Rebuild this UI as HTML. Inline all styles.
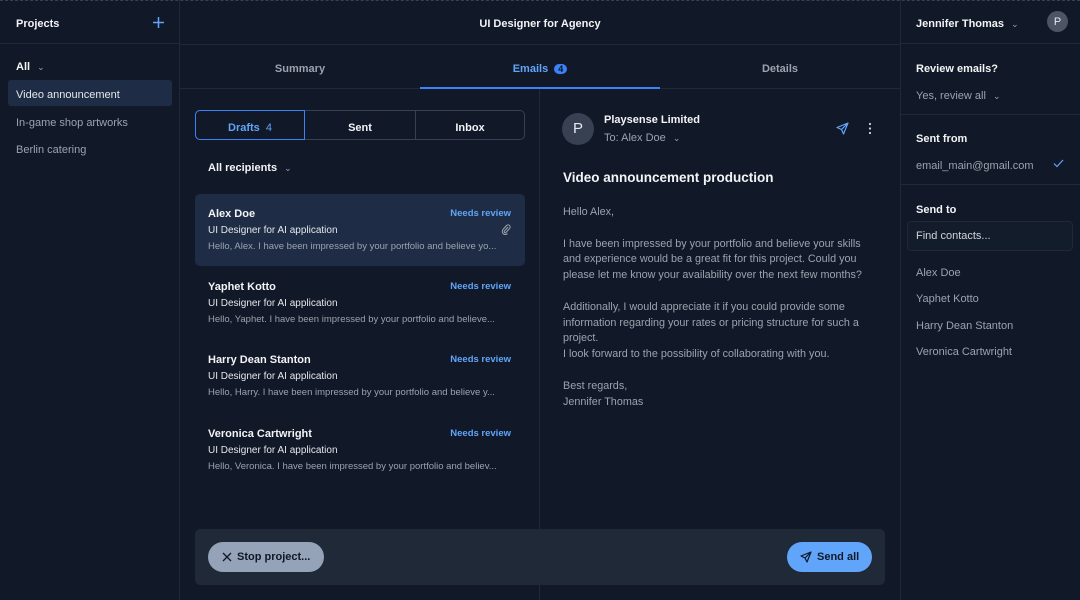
<!DOCTYPE html>
<html><head><meta charset="utf-8"><style>
*{box-sizing:border-box;margin:0;padding:0}
body{width:1080px;height:600px;background:#111827;font-family:"Liberation Sans",sans-serif;color:#f3f4f6;position:relative;overflow:hidden;font-size:11px}
.a{position:absolute;line-height:1.9}
.b{font-weight:bold}
.g{color:#9ca3af}
.gl{color:#d1d5db}
.bl{color:#60a5fa}
.vl{position:absolute;top:0;bottom:0;width:1px;background:#1f2937}
.hl{position:absolute;height:1px;background:#1f2937}
.card{position:absolute;left:195px;width:330px;height:72px;border-radius:5px}
.card div{line-height:1.45}
.card .n{position:absolute;left:13px;top:13px;font-weight:bold;font-size:11px;color:#f3f4f6}
.card .r{position:absolute;right:14px;top:13px;font-weight:bold;font-size:9.5px;color:#60a5fa}
.card .s{position:absolute;left:13px;top:30px;font-size:10px;color:#e5e7eb}
.card .p{position:absolute;left:13px;top:46px;font-size:9.5px;color:#9ca3af}
</style></head><body>
<div class="a" style="left:0;top:0;right:0;border-top:1px dashed #374151"></div>
<div class="vl" style="left:179px"></div>
<div class="vl" style="left:900px"></div>
<div class="vl" style="left:539px;top:89px"></div>
<div class="hl" style="left:0;width:180px;top:43px"></div>
<div class="hl" style="left:180px;width:720px;top:44px"></div>
<div class="hl" style="left:180px;width:720px;top:88px"></div>
<div class="hl" style="left:420px;width:240px;top:87px;height:2px;background:#3b82f6"></div>
<div class="hl" style="left:900px;width:180px;top:43px"></div>
<div class="hl" style="left:900px;width:180px;top:114px"></div>
<div class="hl" style="left:900px;width:180px;top:184px"></div>

<div class="a b" style="left:16px;top:14px;font-size:11px">Projects</div>
<svg class="a" style="left:152px;top:16px" width="13" height="13"><path d="M6.5 1v11M1 6.5h11" stroke="#60a5fa" stroke-width="1.5"/></svg>
<div class="a b" style="left:16px;top:57px">All <span style="font-weight:normal;color:#9ca3af;margin-left:4px;font-size:9px">⌄</span></div>
<div class="a" style="left:8px;top:80px;width:164px;height:26px;background:#1e2d45;border-radius:3px"></div>
<div class="a" style="left:16px;top:85px;color:#e5e7eb">Video announcement</div>
<div class="a g" style="left:16px;top:113px">In-game shop artworks</div>
<div class="a g" style="left:16px;top:140px">Berlin catering</div>

<div class="a b" style="left:180px;width:720px;top:14px;text-align:center">UI Designer for Agency</div>
<div class="a b" style="left:180px;width:240px;top:59px;text-align:center;color:#9ca3af">Summary</div>
<div class="a b bl" style="left:420px;width:240px;top:59px;text-align:center">Emails <span style="background:#3b82f6;color:#0b1220;border-radius:6px;padding:0 4px;font-size:9px;margin-left:3px">4</span></div>
<div class="a b" style="left:660px;width:240px;top:59px;text-align:center;color:#9ca3af">Details</div>

<div class="a" style="left:195px;top:110px;width:330px;height:30px;border:1px solid #374151;border-radius:5px"></div>
<div class="a" style="left:195px;top:110px;width:110px;height:30px;border:1px solid #3b82f6;border-radius:5px 0 0 5px"></div>
<div class="a" style="left:415px;top:111px;width:1px;height:28px;background:#374151"></div>
<div class="a b bl" style="left:195px;width:110px;top:118px;text-align:center">Drafts <span style="font-weight:normal;margin-left:3px">4</span></div>
<div class="a b" style="left:305px;width:110px;top:118px;text-align:center">Sent</div>
<div class="a b" style="left:415px;width:110px;top:118px;text-align:center">Inbox</div>
<div class="a b" style="left:208px;top:158px">All recipients <span style="font-weight:normal;color:#9ca3af;margin-left:4px;font-size:9px">⌄</span></div>

<div class="card" style="top:194px;background:#1e2d45"><div class="n">Alex Doe</div><div class="r">Needs review</div><div class="s">UI Designer for AI application</div><div class="p">Hello, Alex. I have been impressed by your portfolio and believe yo...</div>
<svg class="a" style="right:14px;top:30px" width="10" height="11"><path d="M7 3L3.5 7a1 1 0 0 0 1.5 1.5L8.5 4.5a2 2 0 0 0-3-3L2 5.5a3 3 0 0 0 4.5 4" fill="none" stroke="#9ca3af"/></svg></div>
<div class="card" style="top:267px"><div class="n">Yaphet Kotto</div><div class="r">Needs review</div><div class="s">UI Designer for AI application</div><div class="p">Hello, Yaphet. I have been impressed by your portfolio and believe...</div></div>
<div class="card" style="top:340px"><div class="n">Harry Dean Stanton</div><div class="r">Needs review</div><div class="s">UI Designer for AI application</div><div class="p">Hello, Harry. I have been impressed by your portfolio and believe y...</div></div>
<div class="card" style="top:414px"><div class="n">Veronica Cartwright</div><div class="r">Needs review</div><div class="s">UI Designer for AI application</div><div class="p">Hello, Veronica. I have been impressed by your portfolio and believ...</div></div>

<div class="a" style="left:562px;top:113px;width:32px;height:32px;border-radius:50%;background:#374151;color:#e5e7eb;font-size:15px;text-align:center;line-height:32px">P</div>
<div class="a b" style="left:604px;top:110px">Playsense Limited</div>
<div class="a g" style="left:604px;top:128px">To: Alex Doe <span style="font-size:9px;margin-left:4px">⌄</span></div>
<svg class="a" style="left:836px;top:122px" width="13" height="13"><path d="M12 1L1 5.5l4.5 2 2 4.5zM12 1L5.5 7.5" fill="none" stroke="#60a5fa" stroke-width="1.2" stroke-linejoin="round"/></svg>
<svg class="a" style="left:868px;top:122px" width="4" height="13"><circle cx="2" cy="2" r="1.1" fill="#d1d5db"/><circle cx="2" cy="6.5" r="1.1" fill="#d1d5db"/><circle cx="2" cy="11" r="1.1" fill="#d1d5db"/></svg>
<div class="a b" style="left:563px;top:165px;font-size:13.5px">Video announcement production</div>
<div class="a g" style="left:563px;top:205px;width:314px;line-height:15.8px;font-size:10.8px">Hello Alex,<br><br>I have been impressed by your portfolio and believe your skills and experience would be a great fit for this project. Could you please let me know your availability over the next few months?<br><br>Additionally, I would appreciate it if you could provide some information regarding your rates or pricing structure for such a project.<br>I look forward to the possibility of collaborating with you.<br><br>Best regards,<br>Jennifer Thomas</div>

<div class="a" style="left:195px;top:529px;width:690px;height:56px;background:#1f2937;border-radius:5px"></div>
<div class="a b" style="left:208px;top:542px;width:116px;height:30px;background:#94a3b8;border-radius:15px;color:#111827;line-height:31px;padding-left:29px">Stop project...</div>
<svg class="a" style="left:222px;top:552px" width="10" height="10"><path d="M1 1l8 8M9 1l-8 8" stroke="#111827" stroke-width="1.3"/></svg>
<div class="a b" style="left:787px;top:542px;width:85px;height:30px;background:#60a5fa;border-radius:15px;color:#111827;line-height:31px;padding-left:30px">Send all</div>
<svg class="a" style="left:800px;top:551px" width="12" height="12"><path d="M11 1L1 5l4 2 2 4zM11 1L5 7" fill="none" stroke="#111827" stroke-width="1.2" stroke-linejoin="round"/></svg>

<div class="a b" style="left:916px;top:14px">Jennifer Thomas <span style="font-weight:normal;color:#9ca3af;margin-left:4px;font-size:9px">⌄</span></div>
<div class="a" style="left:1047px;top:11px;width:21px;height:21px;border-radius:50%;background:#4b5563;color:#e5e7eb;text-align:center;line-height:22px;font-size:11px">P</div>
<div class="a b" style="left:916px;top:59px">Review emails?</div>
<div class="a g" style="left:916px;top:86px">Yes, review all <span style="font-size:9px;margin-left:4px">⌄</span></div>
<div class="a b" style="left:916px;top:129px">Sent from</div>
<div class="a g" style="left:916px;top:156px">email_main@gmail.com</div>
<svg class="a" style="left:1053px;top:159px" width="11" height="9"><path d="M1 4.5l3 3L10 1" fill="none" stroke="#60a5fa" stroke-width="1.2"/></svg>
<div class="a b" style="left:916px;top:200px">Send to</div>
<div class="a g" style="left:907px;top:221px;width:166px;height:30px;border:1px solid #1f2937;background:#131c2b;border-radius:4px;padding:4px 8px;color:#d1d5db">Find contacts...</div>
<div class="a g" style="left:916px;top:263px">Alex Doe</div>
<div class="a g" style="left:916px;top:289px">Yaphet Kotto</div>
<div class="a g" style="left:916px;top:316px">Harry Dean Stanton</div>
<div class="a g" style="left:916px;top:342px">Veronica Cartwright</div>
</body></html>
